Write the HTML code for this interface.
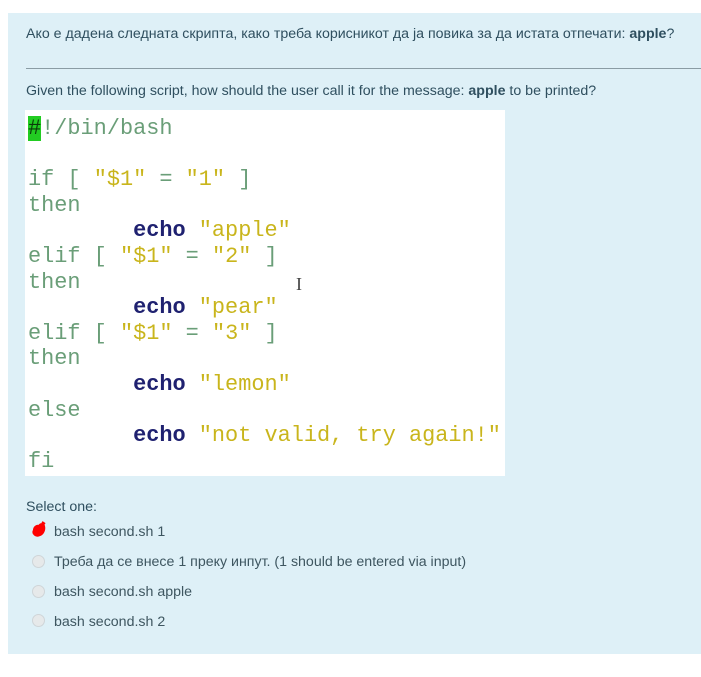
<!DOCTYPE html>
<html><head><meta charset="utf-8"><style>
body{margin:0;width:701px;height:677px;background:#fff;position:relative;overflow:hidden;font-family:"Liberation Sans","DejaVu Sans",sans-serif;}
.panel{position:absolute;left:8px;top:13px;width:693px;height:641px;background:#def0f7;}
.t{position:absolute;font-size:14.2px;color:#2f4f5f;white-space:nowrap;}
.hr{position:absolute;left:26px;top:68px;width:675px;height:1px;background:#8a9ca4;}
.code{position:absolute;left:25px;top:110px;width:480px;height:366px;background:#fff;}
pre{position:absolute;left:28px;top:116px;margin:0;font-family:"Liberation Mono","DejaVu Sans Mono",monospace;font-size:21.9px;line-height:25.6px;color:#6a9e78;}
.s{color:#c9b51c;}
.e{color:#1f2170;font-weight:bold;}
.h{background:#22cc22;color:#0a3a0a;}
.r{position:absolute;left:32px;width:11px;height:11px;border-radius:50%;background:#e6e9ea;border:1px solid #cfd5d8;}
.o{color:#3e5660;}
</style></head><body>
<div class="panel"></div>
<div class="t" style="left:26px;top:26px;">Ако е дадена следната скрипта, како треба корисникот да ја повика за да истата отпечати: <b>apple</b>?</div>
<div class="hr"></div>
<div class="t" style="left:26px;top:83px;">Given the following script, how should the user call it for the message: <b>apple</b> to be printed?</div>
<div class="code"></div>
<pre><span class="h">#</span>!/bin/bash

if [ <span class="s">"$1"</span> = <span class="s">"1"</span> ]
then
        <span class="e">echo</span> <span class="s">"apple"</span>
elif [ <span class="s">"$1"</span> = <span class="s">"2"</span> ]
then
        <span class="e">echo</span> <span class="s">"pear"</span>
elif [ <span class="s">"$1"</span> = <span class="s">"3"</span> ]
then
        <span class="e">echo</span> <span class="s">"lemon"</span>
else
        <span class="e">echo</span> <span class="s">"not valid, try again!"</span>
fi</pre>
<div style="position:absolute;left:296px;top:274px;font-size:18px;color:#444;font-family:'Liberation Serif',serif;">I</div>
<div class="t" style="left:26px;top:499px;">Select one:</div>
<svg style="position:absolute;left:30px;top:520px" width="18" height="18"><path d="M4 10 C2 14 6 17 10 15 C13 14 15 10 14 6 C13 3 10 4 9 6 C7 5 4 7 4 10Z M12 2 L15 4" fill="#f00" stroke="#f00" stroke-width="2"/></svg>
<div class="t o" style="left:54px;top:524px;">bash second.sh 1</div>
<div class="r" style="top:555px;"></div>
<div class="t o" style="left:54px;top:554px;">Треба да се внесе 1 преку инпут. (1 should be entered via input)</div>
<div class="r" style="top:585px;"></div>
<div class="t o" style="left:54px;top:584px;">bash second.sh apple</div>
<div class="r" style="top:614px;"></div>
<div class="t o" style="left:54px;top:614px;">bash second.sh 2</div>
</body></html>
